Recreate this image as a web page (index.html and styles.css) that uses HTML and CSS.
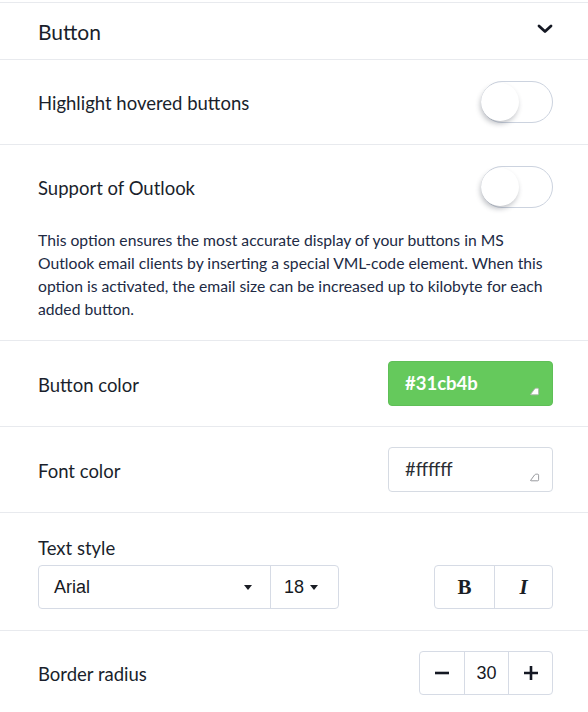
FILE: index.html
```html
<!DOCTYPE html>
<html>
<head>
<meta charset="utf-8">
<link rel="stylesheet" href="styles.css">
</head>
<body>
<div class="panel">
  <div class="header">
    <span class="title">Button</span>
    <svg class="chevron" width="16" height="10" viewBox="0 0 16 10"><path d="M2 2 L8 7.5 L14 2" fill="none" stroke="#141823" stroke-width="2.8" stroke-linecap="round" stroke-linejoin="round"/></svg>
  </div>

  <div class="row">
    <span class="label">Highlight hovered buttons</span>
    <span class="toggle"><span class="knob"></span></span>
  </div>

  <div class="row row-outlook">
    <div class="line">
      <span class="label">Support of Outlook</span>
      <span class="toggle"><span class="knob"></span></span>
    </div>
    <p class="desc">This option ensures the most accurate display of your buttons in MS Outlook email clients by inserting a special VML-code element. When this option is activated, the email size can be increased up to kilobyte for each added button.</p>
  </div>

  <div class="row row-color">
    <span class="label">Button color</span>
    <div class="swatch swatch-green">
      <span>#31cb4b</span>
      <svg class="handle" width="11" height="9" viewBox="0 0 11 9"><path d="M1.5 7.5 L5.5 2 Q6.2 1.2 7.2 1.2 L8.6 1.2 Q9.6 1.2 9.6 2.2 L9.6 6.8 Q9.6 7.8 8.6 7.8 L2 7.8 Z" fill="#fff" stroke="#a9b3a7" stroke-width="0.9"/></svg>
    </div>
  </div>

  <div class="row row-color">
    <span class="label">Font color</span>
    <div class="swatch swatch-white">
      <span>#ffffff</span>
      <svg class="handle" width="11" height="9" viewBox="0 0 11 9"><path d="M1.5 7.5 L5.5 2 Q6.2 1.2 7.2 1.2 L8.6 1.2 Q9.6 1.2 9.6 2.2 L9.6 6.8 Q9.6 7.8 8.6 7.8 L2 7.8 Z" fill="#fff" stroke="#8d8f94" stroke-width="0.9"/></svg>
    </div>
  </div>

  <div class="row row-style">
    <span class="label">Text style</span>
    <div class="style-controls">
      <div class="group select-group">
        <div class="cell font-cell"><span class="arial">Arial</span><span class="caret"></span></div>
        <div class="cell size-cell"><span class="arial">18</span><span class="caret"></span></div>
      </div>
      <div class="group fmt-group">
        <div class="cell fmt-cell bold">B</div>
        <div class="cell fmt-cell italic">I</div>
      </div>
    </div>
  </div>

  <div class="row row-radius">
    <span class="label">Border radius</span>
    <div class="group stepper">
      <div class="cell step-btn">
        <svg width="16" height="16" viewBox="0 0 16 16"><path d="M1 8 H15" stroke="#141823" stroke-width="2.6"/></svg>
      </div>
      <div class="cell step-val arial">30</div>
      <div class="cell step-btn">
        <svg width="16" height="16" viewBox="0 0 16 16"><path d="M1 8 H15 M8 1 V15" stroke="#141823" stroke-width="2.6"/></svg>
      </div>
    </div>
  </div>
</div>
</body>
</html>
```

FILE: styles.css
```css
* { box-sizing: border-box; }

body {
  margin: 0;
  background: #fff;
  font-family: Lato, "Open Sans", sans-serif;
  color: #1a1f2c;
}

.panel {
  width: 588px;
  padding-top: 2px;
}

.header {
  height: 58px;
  border-top: 1px solid #e8eaee;
  border-bottom: 1px solid #e8eaee;
  padding: 2px 35px 0 38px;
  display: flex;
  align-items: center;
  justify-content: space-between;
}

.title {
  font-size: 21px;
  line-height: 26px;
}

.chevron {
  margin-top: -6px;
}

.row {
  padding: 21px 35px 21px 38px;
  border-bottom: 1px solid #e8eaee;
  display: flex;
  align-items: center;
  justify-content: space-between;
}

.label {
  font-size: 18.5px;
  line-height: 22px;
  padding-top: 2px;
}

.toggle {
  position: relative;
  width: 72px;
  height: 42px;
  border: 1px solid #ccd3df;
  border-radius: 21px;
  background: #fff;
  display: block;
}

.knob {
  position: absolute;
  left: -1px;
  top: 1px;
  width: 38px;
  height: 38px;
  border-radius: 50%;
  background: #fff;
  box-shadow: -1px 3px 5px rgba(40, 45, 60, 0.28);
}

.row-outlook {
  display: block;
  padding-bottom: 19px;
}

.line {
  display: flex;
  align-items: center;
  justify-content: space-between;
}

.desc {
  margin: 21px 0 0;
  font-size: 15.7px;
  line-height: 23px;
  color: #212a44;
}

.row-color {
  padding-top: 20px;
  padding-bottom: 20px;
}

.swatch {
  width: 165px;
  height: 45px;
  border-radius: 4px;
  padding: 0 12px 0 16px;
  display: flex;
  align-items: center;
  justify-content: space-between;
  font-size: 18.5px;
}

.swatch span {
  margin-top: -2px;
}

.swatch .handle {
  align-self: flex-end;
  margin-bottom: 9px;
}

.swatch-green {
  background: #65c95c;
  border: 1px solid #5fbf57;
  color: #fff;
  font-weight: 700;
}

.swatch-white {
  background: #fff;
  border: 1px solid #d6dbe3;
  color: #2a2d33;
}

.row-style {
  display: block;
  padding-top: 24px;
  padding-bottom: 21px;
}

.style-controls {
  margin-top: 6px;
  display: flex;
  justify-content: space-between;
}

.group {
  display: flex;
  height: 44px;
  border: 1px solid #d6dbe5;
  border-radius: 4px;
  background: #fff;
}

.cell {
  display: flex;
  align-items: center;
}

.cell + .cell {
  border-left: 1px solid #d6dbe5;
}

.arial {
  font-family: "Liberation Sans", Arial, sans-serif;
  font-size: 18px;
  color: #16191f;
}

.select-group {
  width: 301px;
}

.font-cell {
  width: 231px;
  padding: 0 18px 0 15px;
  justify-content: space-between;
}

.size-cell {
  flex: 1;
  padding-left: 13px;
  gap: 6px;
}

.caret {
  width: 0;
  height: 0;
  border-left: 4.5px solid transparent;
  border-right: 4.5px solid transparent;
  border-top: 5px solid #1a1d24;
}

.fmt-group {
  width: 119px;
}

.fmt-cell {
  width: 59px;
  justify-content: center;
  font-family: "Liberation Serif", "Times New Roman", serif;
  font-size: 21px;
  font-weight: 700;
  color: #1a1d24;
}

.fmt-cell + .fmt-cell {
  flex: 1;
}

.italic {
  font-style: italic;
}

.row-radius {
  padding-top: 20px;
  padding-bottom: 21px;
}

.stepper {
  width: 134px;
}

.step-btn {
  width: 44px;
  justify-content: center;
}

.step-val {
  width: 45px;
  justify-content: center;
}
```
